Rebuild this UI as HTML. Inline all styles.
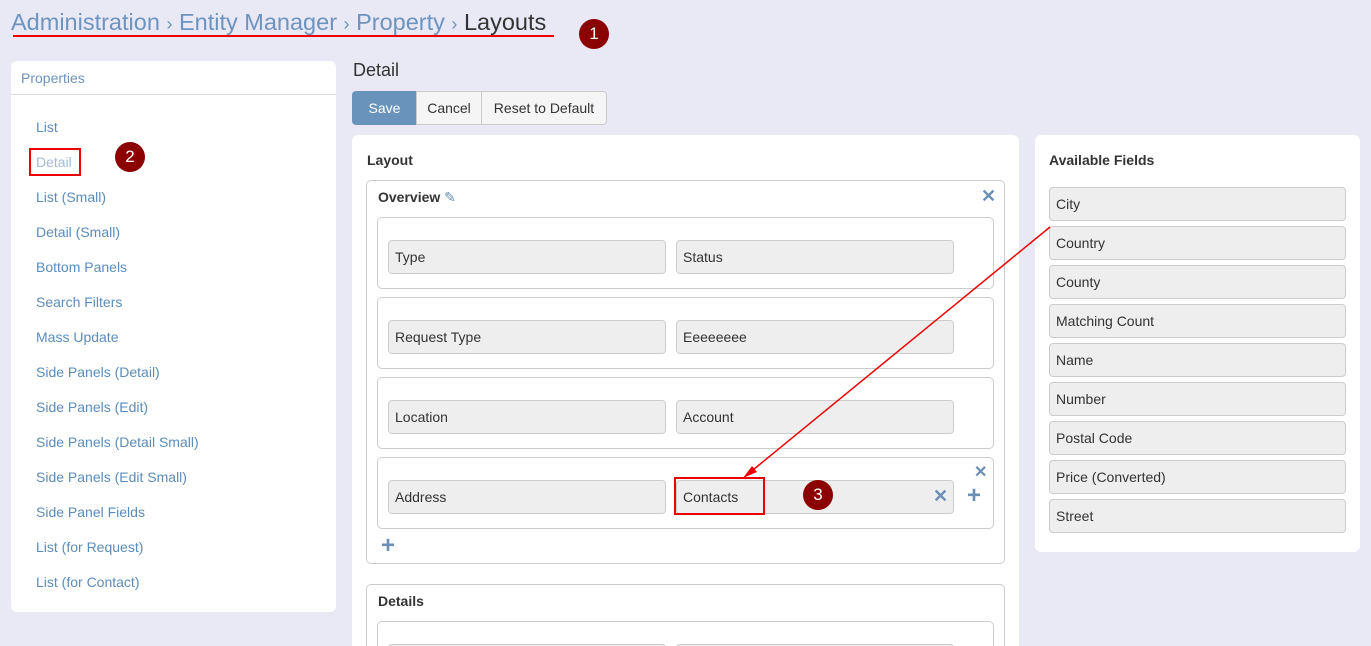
<!DOCTYPE html>
<html style="width:1371px;height:646px;overflow:hidden"><head><style>
*{box-sizing:border-box;margin:0;padding:0}
body{width:1371px;height:646px;background:#e9e8f5;font-family:"Liberation Sans",sans-serif;font-size:14px;color:#333;position:relative;overflow:hidden}
.a{position:absolute}
.panel{position:absolute;background:#fff;border-radius:6px}
.bx{position:absolute;border:1px solid #ccc;border-radius:5px;background:#fff}
.f{position:absolute;background:#eee;border:1px solid #ccc;border-radius:4px;height:34px;line-height:32px;padding-left:6px;color:#333}
.lnk{position:absolute;left:36px;color:#5b8cbb}
.badge{position:absolute;width:30px;height:30px;border-radius:50%;background:#8b0000;color:#fff;text-align:center;line-height:30px;font-size:17px}
.x{position:absolute;color:#6b8fb5;font-weight:bold;font-size:18px}
.pl{position:absolute;color:#6b8fb5;font-weight:bold;font-size:24px}
</style></head><body>
<div class="a" style="left:11px;top:9px;font-size:23.5px;color:#6d93bf;white-space:nowrap">Administration <span style="font-size:18px">›</span> Entity Manager <span style="font-size:18px">›</span> Property <span style="font-size:18px">›</span> <span style="color:#333">Layouts</span></div>
<div class="a" style="left:13px;top:35px;width:541px;height:2px;background:#e00"></div>
<div class="badge" style="left:579px;top:19px">1</div>

<div class="panel" style="left:11px;top:61px;width:325px;height:551px">
<div class="a" style="left:10px;top:9px;color:#6d93bf">Properties</div>
<div class="a" style="left:0;top:33px;width:325px;height:1px;background:#ddd"></div>
</div>
<div class="lnk" style="top:119px">List</div>
<div class="a" style="left:29px;top:148px;width:52px;height:28px;border:2px solid #e00"></div>
<div class="lnk" style="top:154px;color:#a3bcd6">Detail</div>
<div class="badge" style="left:115px;top:142px">2</div>
<div class="lnk" style="top:189px">List (Small)</div>
<div class="lnk" style="top:224px">Detail (Small)</div>
<div class="lnk" style="top:259px">Bottom Panels</div>
<div class="lnk" style="top:294px">Search Filters</div>
<div class="lnk" style="top:329px">Mass Update</div>
<div class="lnk" style="top:364px">Side Panels (Detail)</div>
<div class="lnk" style="top:399px">Side Panels (Edit)</div>
<div class="lnk" style="top:434px">Side Panels (Detail Small)</div>
<div class="lnk" style="top:469px">Side Panels (Edit Small)</div>
<div class="lnk" style="top:504px">Side Panel Fields</div>
<div class="lnk" style="top:539px">List (for Request)</div>
<div class="lnk" style="top:574px">List (for Contact)</div>

<div class="a" style="left:353px;top:60px;font-size:18px">Detail</div>
<div class="a" style="left:352px;top:91px;width:65px;height:34px;background:#6a93bb;color:#fff;border-radius:4px 0 0 4px;text-align:center;line-height:34px">Save</div>
<div class="a" style="left:416px;top:91px;width:66px;height:34px;background:#f5f5f5;border:1px solid #ccc;text-align:center;line-height:32px">Cancel</div>
<div class="a" style="left:481px;top:91px;width:126px;height:34px;background:#f5f5f5;border:1px solid #ccc;border-radius:0 4px 4px 0;text-align:center;line-height:32px">Reset to Default</div>

<div class="panel" style="left:352px;top:135px;width:667px;height:520px"></div>
<div class="a" style="left:367px;top:152px;font-weight:bold;font-size:14px">Layout</div>
<div class="bx" style="left:366px;top:180px;width:639px;height:384px"></div>
<div class="a" style="left:378px;top:189px;font-weight:bold">Overview <span style="color:#6b8fb5;font-weight:normal">✎</span></div>
<div class="x" style="left:981px;top:186px">✕</div>

<div class="bx" style="left:377px;top:217px;width:617px;height:72px"></div>
<div class="f" style="left:388px;top:240px;width:278px">Type</div>
<div class="f" style="left:676px;top:240px;width:278px">Status</div>
<div class="bx" style="left:377px;top:297px;width:617px;height:72px"></div>
<div class="f" style="left:388px;top:320px;width:278px">Request Type</div>
<div class="f" style="left:676px;top:320px;width:278px">Eeeeeeee</div>
<div class="bx" style="left:377px;top:377px;width:617px;height:72px"></div>
<div class="f" style="left:388px;top:400px;width:278px">Location</div>
<div class="f" style="left:676px;top:400px;width:278px">Account</div>
<div class="bx" style="left:377px;top:457px;width:617px;height:72px"></div>
<div class="f" style="left:388px;top:480px;width:278px">Address</div>
<div class="f" style="left:676px;top:480px;width:278px">Contacts</div>
<div class="a" style="left:674px;top:477px;width:91px;height:38px;border:2px solid #e00"></div>
<div class="badge" style="left:803px;top:480px">3</div>
<div class="x" style="left:933px;top:486px">✕</div>
<div class="x" style="left:974px;top:462px;font-size:16px">✕</div>
<div class="pl" style="left:967px;top:482px">+</div>
<div class="pl" style="left:381px;top:532px">+</div>

<div class="bx" style="left:366px;top:584px;width:639px;height:80px"></div>
<div class="a" style="left:378px;top:593px;font-weight:bold">Details</div>
<div class="bx" style="left:377px;top:621px;width:617px;height:40px"></div>
<div class="f" style="left:388px;top:644px;width:278px"></div>
<div class="f" style="left:676px;top:644px;width:278px"></div>

<div class="panel" style="left:1035px;top:135px;width:325px;height:417px"></div>
<div class="a" style="left:1049px;top:152px;font-weight:bold">Available Fields</div>
<div class="f" style="left:1049px;top:187px;width:297px">City</div>
<div class="f" style="left:1049px;top:226px;width:297px">Country</div>
<div class="f" style="left:1049px;top:265px;width:297px">County</div>
<div class="f" style="left:1049px;top:304px;width:297px">Matching Count</div>
<div class="f" style="left:1049px;top:343px;width:297px">Name</div>
<div class="f" style="left:1049px;top:382px;width:297px">Number</div>
<div class="f" style="left:1049px;top:421px;width:297px">Postal Code</div>
<div class="f" style="left:1049px;top:460px;width:297px">Price (Converted)</div>
<div class="f" style="left:1049px;top:499px;width:297px">Street</div>

<svg class="a" style="left:0;top:0" width="1371" height="646"><line x1="1050" y1="227" x2="748" y2="474" stroke="#e00" stroke-width="1.5"/><polygon points="743,478 752,466 757,472" fill="#e00"/></svg>
</body></html>
